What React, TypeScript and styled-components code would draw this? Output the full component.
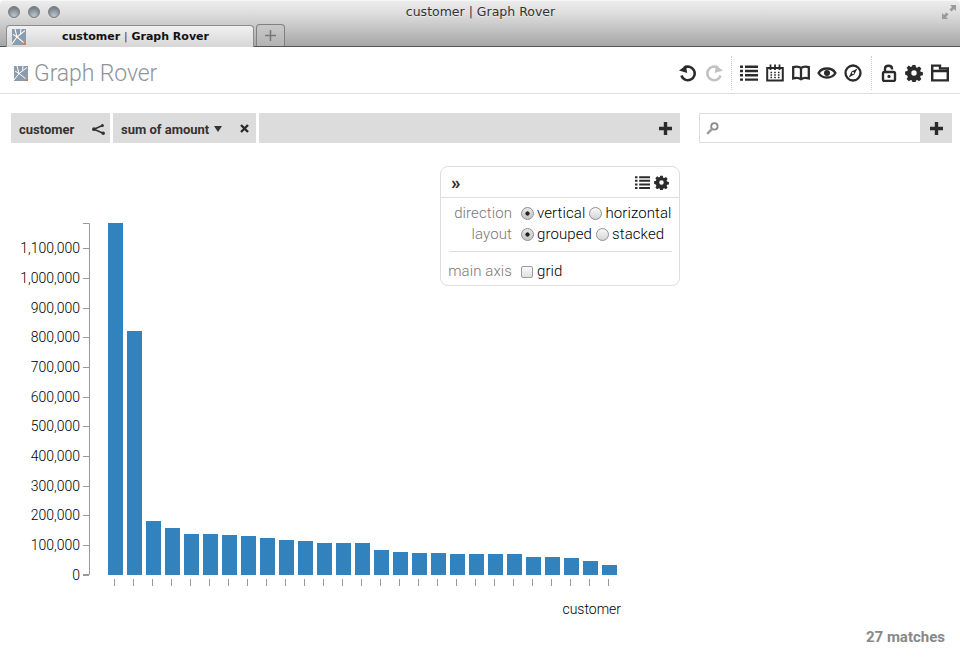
import React from "react";
import styled, { createGlobalStyle } from "styled-components";

const Global = createGlobalStyle`
  html, body { margin: 0; padding: 0; height: 100%; background: #fff; }
  body { font-family: Roboto, "Liberation Sans", sans-serif; color: #222; overflow: hidden; }
  #root { height: 100%; }
`;

const Page = styled.div`
  width: 960px; height: 662px; display: flex; flex-direction: column; position: relative;
`;
const Chrome = styled.header`
  height: 47px; box-sizing: border-box; flex: none; display: flex; flex-direction: column;
  background: linear-gradient(#ececec 0%, #dcdcdc 30%, #bdbdbd 70%, #a6a6a6 100%);
  border-top: 1px solid #f6f6f6; border-bottom: 1px solid #555;
  border-radius: 4px 4px 0 0;
`;
const TitleBar = styled.div`
  height: 23px; box-sizing: border-box; flex: none; display: flex; align-items: center;
  padding: 0 3px 2px 8px; gap: 8px;
`;
const Light = styled.span`
  width: 12px; height: 12px; border-radius: 50%; flex: none; box-sizing: border-box;
  background: radial-gradient(circle at 50% 85%, #bcc4cc 0%, #8b949c 55%, #656c73 100%);
  border: 1px solid #787d82;
`;
const WindowTitle = styled.div`
  flex: 1; text-align: center; margin-right: 40px;
  font: 12.5px "DejaVu Sans", sans-serif; color: #333; text-shadow: 0 1px 0 rgba(255,255,255,.5);
`;
const TabStrip = styled.div`
  flex: 1; display: flex; align-items: flex-end; padding-left: 6px; gap: 2px; min-height: 0;
`;
const Tab = styled.div`
  width: 248px; height: 22px; box-sizing: border-box; display: flex; align-items: center;
  padding-left: 5px; position: relative; top: 1px;
  background: linear-gradient(#f1f1f1, #d6d6d6);
  border: 1px solid #8c8c8c; border-bottom: none; border-radius: 4px 4px 0 0;
`;
const TabTitle = styled.div`
  margin-left: 36px; font: bold 11px "DejaVu Sans", sans-serif; color: #111; white-space: nowrap;
  em { font-style: normal; font-weight: normal; color: #8a2020; }
`;
const NewTab = styled.div`
  width: 29px; height: 22px; box-sizing: border-box; display: flex; align-items: center; justify-content: center;
  background: linear-gradient(#c9c9c9, #b3b3b3); border: 1px solid #808080; border-bottom: none;
  border-radius: 4px 4px 0 0; color: #6f6f6f;
`;
const TopBar = styled.div`
  height: 47px; box-sizing: border-box; flex: none; border-bottom: 1px solid #ddd;
  display: flex; align-items: center; padding: 6px 0 0 14px;
`;
const Brand = styled.div`
  display: flex; align-items: center; gap: 6px; flex: 1;
  font-size: 23px; font-weight: 300; color: #8e9499; letter-spacing: -0.1px;
`;
const ToolGroup = styled.div<{ $rule?: boolean; $pl?: number }>`
  display: flex; align-items: center; gap: 8px; height: 34px;
  padding: 0 ${(p) => (p.$rule ? "9px" : "8px")} 0 ${(p) => p.$pl ?? 8}px;
  border-left: ${(p) => (p.$rule ? "1px dotted #ccc" : "none")};
  &:first-of-type { gap: 7px; }
  &:last-child { padding-right: 11px; }
`;
const Tool = styled.span<{ $off?: boolean }>`
  width: 18px; height: 18px; display: flex; align-items: center; justify-content: center;
  color: ${(p) => (p.$off ? "#c2c2c2" : "#2b2b2b")};
`;
const FilterRow = styled.div`
  height: 30px; flex: none; margin: 19px 8px 0 11px; display: flex;
`;
const Pills = styled.div`
  width: 669px; flex: none; display: flex; gap: 3px;
`;
const Pill = styled.div<{ $w?: number }>`
  background: #dcdcdc; display: flex; align-items: center; justify-content: space-between;
  box-sizing: border-box; padding: 2px 5px 0 8px; font-size: 13px; font-weight: 700; color: #333;
  ${(p) => (p.$w ? `width:${p.$w}px;flex:none;` : "flex:1;justify-content:flex-end;padding:0 8px 0 0;")}
`;
const PillLabel = styled.span`
  display: flex; align-items: center; gap: 5px;
`;
const Search = styled.div`
  margin-left: 19px; flex: 1; display: flex;
`;
const SearchField = styled.div`
  flex: 1; box-sizing: border-box; background: #fff; border: 1px solid #ddd; border-right: none;
  display: flex; align-items: center; padding-left: 6px;
`;
const SearchAdd = styled.div`
  width: 32px; background: #dcdcdc; display: flex; align-items: center; justify-content: center;
`;
const Body = styled.main`
  flex: 1; position: relative; min-height: 0;
`;
const Chart = styled.svg`
  display: block; margin-top: 0; font-family: Roboto, sans-serif; font-size: 14px; font-weight: 300;
`;
const Panel = styled.section`
  position: absolute; left: 440px; top: 23px; width: 240px; height: 120px; box-sizing: border-box;
  background: #fff; border: 1px solid #ddd; border-radius: 8px;
`;
const PanelHead = styled.div`
  height: 31px; box-sizing: border-box; border-bottom: 1px solid #ddd; display: flex; align-items: center;
  padding: 0 10px; color: #2b2b2b;
`;
const Chevrons = styled.span`
  flex: 1; font-size: 19px; font-weight: 700; line-height: 1; position: relative; top: 0;
`;
const PanelIcons = styled.span`
  display: flex; align-items: center; gap: 4px;
`;
const OptionGrid = styled.div<{ $flush?: boolean }>`
  display: grid; grid-template-columns: 71px 1fr; column-gap: 9px; row-gap: 0;
  padding-top: ${(p) => (p.$flush ? 0 : 5)}px;
  font-size: 15px; line-height: 21px; letter-spacing: 0.1px;
`;
const OptionLabel = styled.span`
  text-align: right; color: #777; font-weight: 300;
`;
const Options = styled.span`
  display: flex; align-items: center; color: #000; font-weight: 300; white-space: nowrap;
`;
const Choice = styled.label`
  display: flex; align-items: center; gap: 3px; margin-right: 4px;
`;
const Radio = styled.input.attrs({ type: "radio", readOnly: true })`
  appearance: none; width: 13px; height: 13px; margin: 0; border-radius: 50%; box-sizing: border-box;
  border: 1px solid #8f8f8f; background: linear-gradient(#f8f8f8, #d6d6d6);
  &:checked { background: radial-gradient(circle, #222 0 1.8px, transparent 2.4px), linear-gradient(#e6e6e6, #c4c4c4); }
`;
const Check = styled.input.attrs({ type: "checkbox", readOnly: true })`
  appearance: none; width: 12px; height: 12px; margin: 1px 1px 0 0; border-radius: 2px; box-sizing: border-box;
  border: 1px solid #9a9a9a; background: linear-gradient(#fafafa, #e0e0e0);
`;
const Rule = styled.hr`
  border: none; border-top: 1px solid #ddd; margin: 6px 7px 9px 8px;
`;
const Matches = styled.div`
  position: absolute; right: 15px; bottom: 16px; font-size: 15px; font-weight: 700; color: #888;
`;

const Logo = ({ w, h }: { w: number; h: number }) => (
  <svg width={w} height={h} viewBox="0 0 14 15" preserveAspectRatio="none">
    <rect width="14" height="15" fill="#8b9dac" />
    <path d="M3 0 L5 7.5 M13 1.5 L5 7.5 M1 5 L5 7.5 M5 7.5 L12 13 M0 14 L5 7.5 M8.5 4.5 L9 0" stroke="#fff" strokeWidth="1" fill="none" />
    <rect x="11.5" y="12.5" width="2.5" height="2.5" fill="#e8782a" />
  </svg>
);
const Plus = ({ color = "#2b2b2b", s = 13, t = 3.4 }: { color?: string; s?: number; t?: number }) => (
  <svg width={s} height={s} viewBox="0 0 13 13">
    <path d="M6.5 0 V13 M0 6.5 H13" stroke={color} strokeWidth={t} />
  </svg>
);
const Gear = ({ s = 18 }: { s?: number }) => (
  <svg width={s} height={s} viewBox="0 0 18 18" fill="currentColor" fillRule="evenodd">
    <path d="M7.3 0h3.4l.5 2.5 1.4.6 2.2-1.4 2.4 2.4-1.4 2.2.6 1.4 2.5.5v3.4l-2.5.5-.6 1.4 1.4 2.2-2.4 2.4-2.2-1.4-1.4.6-.5 2.5H7.3l-.5-2.5-1.4-.6-2.2 1.4-2.4-2.4 1.4-2.2-.6-1.4L-.9 10.7V7.3l2.5-.5.6-1.4L.8 3.2l2.4-2.4 2.2 1.4 1.4-.6zM9 6a3 3 0 1 0 0 6 3 3 0 0 0 0-6z" transform="translate(.9 .9) scale(.9)" />
  </svg>
);
const ListIcon = ({ s = 18 }: { s?: number }) => (
  <svg width={s} height={s} viewBox="0 0 18 18" fill="currentColor">
    <path d="M0 1.5h3v2.4H0zM5 1.5h13v2.4H5zM0 5.8h3v2.4H0zM5 5.8h13v2.4H5zM0 10.1h3v2.4H0zM5 10.1h13v2.4H5zM0 14.4h3v2.4H0zM5 14.4h13v2.4H5z" />
  </svg>
);

const ico = { width: 18, height: 18, viewBox: "0 0 18 18", fill: "none", stroke: "currentColor", strokeWidth: 2.6 };
const Undo = () => (
  <svg {...ico}><path d="M5 3.8 A6.8 6.8 0 1 1 2.4 11.5" /><path d="M0 6.5 L8.2 9 L7 1.6 Z" fill="currentColor" stroke="none" /></svg>
);
const Redo = () => (
  <svg {...ico} style={{ transform: "scaleX(-1)" }}><path d="M5 3.8 A6.8 6.8 0 1 1 2.4 11.5" /><path d="M0 6.5 L8.2 9 L7 1.6 Z" fill="currentColor" stroke="none" /></svg>
);
const CalendarIco = () => (
  <svg {...ico} strokeWidth={2}>
    <path d="M1.2 4 H16.8 V16.6 H1.2 Z" />
    <path d="M4.5 0.5 V6 M9 0.5 V6 M13.5 0.5 V6" strokeWidth={1.8} />
    <path d="M4.5 8.5h1.6M8.2 8.5h1.6M11.9 8.5h1.6M4.5 11h1.6M8.2 11h1.6M11.9 11h1.6M4.5 13.5h1.6M8.2 13.5h1.6M11.9 13.5h1.6" strokeWidth={1.6} />
  </svg>
);
const BookIco = () => (
  <svg {...ico} strokeWidth={2.3}>
    <path d="M9 4 C7 2.6 4 2.4 1.2 3.2 V14.4 C4 13.6 7 13.8 9 15.2 C11 13.8 14 13.6 16.8 14.4 V3.2 C14 2.4 11 2.6 9 4 Z M9 4 V15" />
  </svg>
);
const EyeIco = () => (
  <svg {...ico} strokeWidth={2.4} style={{ overflow: "visible" }}>
    <path d="M.6 9 C4 3 14 3 17.4 9 C14 15 4 15 .6 9 Z" />
    <circle cx="9" cy="9" r="3" fill="currentColor" stroke="none" />
  </svg>
);
const CompassIco = () => (
  <svg {...ico} strokeWidth={2.3}>
    <circle cx="9" cy="9" r="7.5" />
    <path d="M13.4 4.6 L10.4 10.4 L4.6 13.4 L7.6 7.6 Z" fill="currentColor" stroke="none" />
    <circle cx="9" cy="9" r="1.1" fill="#fff" stroke="none" />
  </svg>
);
const LockIco = () => (
  <svg {...ico} strokeWidth={2.4}>
    <path d="M6 8 V4.8 C6 .8 13 .8 13 4.8 V5.6" />
    <rect x="4" y="8" width="12" height="9" rx="1.5" />
    <circle cx="10" cy="12.4" r="1.6" fill="currentColor" stroke="none" />
  </svg>
);
const FolderIco = () => (
  <svg {...ico} strokeWidth={2.4}>
    <path d="M1.2 1.6 H9 V4.4 H16.8 V16.4 H1.2 Z M1.2 7 H16.8" />
  </svg>
);
const ShareIco = () => (
  <svg width="13" height="11" viewBox="0 0 13 11" fill="currentColor">
    <circle cx="2" cy="5.2" r="1.9" /><circle cx="10.4" cy="1.6" r="1.5" /><circle cx="11.2" cy="9.2" r="1.7" />
    <path d="M2 5.2 L10.4 1.6 M2 5.2 L11.2 9.2" stroke="currentColor" strokeWidth="1.6" />
  </svg>
);
const CloseIco = () => (
  <svg width="9" height="9" viewBox="0 0 9 9" style={{ position: "relative", top: -1, right: 2 }}><path d="M1 1 L8 8 M8 1 L1 8" stroke="#2b2b2b" strokeWidth="2.4" /></svg>
);
const Caret = () => (
  <svg width="8" height="6" viewBox="0 0 8 6"><path d="M0 0 H8 L4 6 Z" fill="#333" /></svg>
);
const KeyIco = () => (
  <svg width="13" height="13" viewBox="0 0 13 13" fill="none">
    <circle cx="8.4" cy="4.4" r="3.2" stroke="#8a8a8a" strokeWidth="1.8" />
    <path d="M6 7 L1.2 11.8" stroke="#a0a0a0" strokeWidth="2.6" />
  </svg>
);

const tops = [223, 331, 521, 528, 534, 534, 535, 536, 538, 540, 541, 543, 543, 543, 550, 552, 553, 553, 554, 554, 554, 554, 557, 557, 558, 561, 565];
const yLabels = ["0", "100,000", "200,000", "300,000", "400,000", "500,000", "600,000", "700,000", "800,000", "900,000", "1,000,000", "1,100,000"];
const OFFSET = 143; // chart svg top in page coordinates

const BarChart = () => (
  <Chart width="700" height="480" viewBox={`0 ${OFFSET} 700 480`}>
    <path d="M83 223.5 H89.5 V574.5 H83" fill="none" stroke="#999" />
    {yLabels.map((t, i) => {
      const y = 574.5 - i * 29.65;
      return (
        <g key={t}>
          <line x1="83" x2="89" y1={Math.round(y) + 0.5} y2={Math.round(y) + 0.5} stroke="#999" />
          <text x="80" y={y + 5} textAnchor="end" fill="#000">{t}</text>
        </g>
      );
    })}
    {tops.map((top, i) => (
      <g key={i}>
        <rect x={108 + i * 19} y={top} width="15" height={575 - top} fill="#3282be" />
        <line x1={114.5 + i * 19} x2={114.5 + i * 19} y1="579" y2="586" stroke="#999" />
      </g>
    ))}
    <text x="621" y="614" textAnchor="end" fill="#000">customer</text>
  </Chart>
);

export default function App() {
  return (
    <Page>
      <Global />
      <Chrome>
        <TitleBar>
          <Light /><Light /><Light />
          <WindowTitle>customer | Graph Rover</WindowTitle>
          <svg width="16" height="16" viewBox="0 0 16 16" fill="#9a9a9a">
            <path d="M9 1 H15 V7 L13 5 L10.5 7.5 L8.5 5.5 L11 3 Z M7 15 H1 V9 L3 11 L5.5 8.5 L7.5 10.5 L5 13 Z" />
          </svg>
        </TitleBar>
        <TabStrip>
          <Tab>
            <Logo w={14} h={16} />
            <TabTitle>customer <em>|</em> Graph Rover</TabTitle>
          </Tab>
          <NewTab><Plus color="#777" s={11} t={1.8} /></NewTab>
        </TabStrip>
      </Chrome>
      <TopBar>
        <Brand><Logo w={14} h={15} />Graph Rover</Brand>
        <ToolGroup>
          <Tool><Undo /></Tool>
          <Tool $off><Redo /></Tool>
        </ToolGroup>
        <ToolGroup $rule $pl={8}>
          <Tool><ListIcon /></Tool>
          <Tool><CalendarIco /></Tool>
          <Tool><BookIco /></Tool>
          <Tool><EyeIco /></Tool>
          <Tool><CompassIco /></Tool>
        </ToolGroup>
        <ToolGroup $rule $pl={7}>
          <Tool><LockIco /></Tool>
          <Tool><Gear /></Tool>
          <Tool><FolderIco /></Tool>
        </ToolGroup>
      </TopBar>
      <FilterRow>
        <Pills>
          <Pill $w={99}>customer<ShareIco /></Pill>
          <Pill $w={143}><PillLabel>sum of amount <Caret /></PillLabel><CloseIco /></Pill>
          <Pill><Plus /></Pill>
        </Pills>
        <Search>
          <SearchField><KeyIco /></SearchField>
          <SearchAdd><Plus /></SearchAdd>
        </Search>
      </FilterRow>
      <Body>
        <BarChart />
        <Panel>
          <PanelHead>
            <Chevrons>»</Chevrons>
            <PanelIcons><ListIcon s={15} /><Gear s={15} /></PanelIcons>
          </PanelHead>
          <OptionGrid>
            <OptionLabel>direction</OptionLabel>
            <Options>
              <Choice><Radio checked name="d1" />vertical</Choice>
              <Choice><Radio name="d1" />horizontal</Choice>
            </Options>
            <OptionLabel>layout</OptionLabel>
            <Options>
              <Choice><Radio checked name="d2" />grouped</Choice>
              <Choice><Radio name="d2" />stacked</Choice>
            </Options>
          </OptionGrid>
          <Rule />
          <OptionGrid $flush>
            <OptionLabel>main axis</OptionLabel>
            <Options><Choice><Check />grid</Choice></Options>
          </OptionGrid>
        </Panel>
        <Matches>27 matches</Matches>
      </Body>
    </Page>
  );
}
